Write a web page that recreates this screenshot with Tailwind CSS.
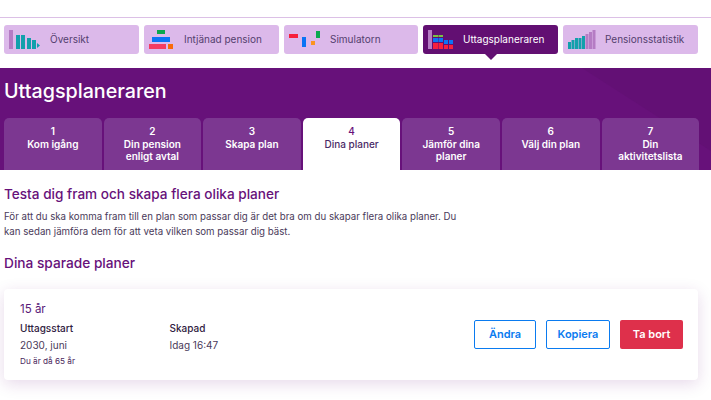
<!DOCTYPE html>
<html lang="sv">
  <head>
    <meta charset="UTF-8" />
    <meta name="viewport" content="width=device-width, initial-scale=1.0" />
    <title>Uttagsplaneraren</title>
    <script src="https://cdn.jsdelivr.net/npm/@tailwindcss/browser@4"></script>
  </head>
  <body class="bg-white min-h-screen font-['Inter',sans-serif] text-[#3c2a4d]">
    <!-- Top navigation -->
    <div class="mt-[17px] h-[51px] border-t border-[#dcc0e6] pt-[7px] pl-[4px]">
      <div class="flex gap-[5px]">
        <a class="flex items-center w-[135px] h-[29px] rounded-[3px] bg-[#dcb9ea] text-[10px] text-[#54406e]">
          <svg width="36" height="24" viewBox="8 28 36 24" class="ml-[4px] shrink-0">
            <rect x="9" y="30" width="4" height="19" fill="#b57cc4" />
            <rect x="16" y="35" width="4" height="14" fill="#12a0ac" />
            <rect x="21" y="35" width="4" height="14" fill="#12a0ac" />
            <rect x="27" y="38" width="4" height="11" fill="#12a0ac" />
            <rect x="32" y="40" width="4" height="9" fill="#12a0ac" />
            <polygon points="37,43 40,45.5 37,48" fill="#12a0ac" />
          </svg>
          <span class="ml-[6px]">Översikt</span>
        </a>
        <a class="flex items-center w-[135px] h-[29px] rounded-[3px] bg-[#dcb9ea] text-[10px] text-[#54406e]">
          <svg width="26" height="24" viewBox="148 28 26 24" class="ml-[4px] shrink-0">
            <rect x="157" y="30" width="8" height="4" fill="#0ba84f" />
            <rect x="152" y="37" width="18" height="5" fill="#0b74f5" />
            <rect x="149" y="44" width="17" height="5" fill="#f53c62" />
            <rect x="168" y="44" width="5" height="5" fill="#f96a0a" />
          </svg>
          <span class="ml-[10px]">Intjänad pension</span>
        </a>
        <a class="flex items-center w-[134px] h-[29px] rounded-[3px] bg-[#dcb9ea] text-[10px] text-[#54406e]">
          <svg width="36" height="24" viewBox="288 28 36 24" class="ml-[4px] shrink-0">
            <rect x="289" y="34" width="9" height="4" fill="#f7203c" />
            <rect x="302" y="37" width="4" height="10" fill="#0b74f5" />
            <rect x="311" y="41" width="4" height="4" fill="#fb9420" />
            <rect x="316" y="31" width="4" height="7" fill="#0ba84f" />
          </svg>
          <span class="ml-[6px]">Simulatorn</span>
        </a>
        <a class="relative flex items-center w-[135px] h-[29px] rounded-[3px] bg-[#620f72] text-[10px] text-white">
          <svg width="28" height="24" viewBox="427 28 28 24" class="ml-[4px] shrink-0">
            <rect x="428" y="30" width="4" height="19" fill="#b57cc4" />
            <rect x="433" y="35" width="5" height="2" fill="#7cc242" />
            <rect x="438.5" y="35" width="4.5" height="2" fill="#7cc242" />
            <rect x="433" y="38" width="5" height="4" fill="#0b74f5" />
            <rect x="438.5" y="38" width="4.5" height="4" fill="#0b74f5" />
            <rect x="433" y="43" width="5" height="6" fill="#f7203c" />
            <rect x="438.5" y="43" width="4.5" height="6" fill="#f7203c" />
            <rect x="444" y="40" width="4" height="4" fill="#0b74f5" />
            <rect x="449" y="40" width="4" height="4" fill="#0b74f5" />
            <rect x="444" y="45" width="4" height="4" fill="#f7203c" />
            <rect x="449" y="45" width="4" height="4" fill="#f7203c" />
          </svg>
          <span class="ml-[8px]">Uttagsplaneraren</span>
          <span class="absolute left-[62px] top-[29px] w-0 h-0 border-x-[6px] border-x-transparent border-t-[6px] border-t-[#620f72]"></span>
        </a>
        <a class="flex items-center w-[135px] h-[29px] rounded-[3px] bg-[#dcb9ea] text-[10px] text-[#54406e]">
          <svg width="30" height="24" viewBox="567 28 30 24" class="ml-[4px] shrink-0">
            <rect x="568" y="42" width="3" height="7" fill="#12a0ac" />
            <rect x="571.5" y="40" width="3" height="9" fill="#12a0ac" />
            <rect x="575" y="38" width="3" height="11" fill="#12a0ac" />
            <rect x="578.5" y="38" width="3" height="11" fill="#12a0ac" />
            <rect x="582" y="36" width="3" height="13" fill="#12a0ac" />
            <rect x="585.5" y="34" width="3" height="15" fill="#b57cc4" />
            <rect x="589" y="32" width="3" height="17" fill="#b57cc4" />
            <rect x="592.5" y="30" width="3" height="19" fill="#b57cc4" />
          </svg>
          <span class="ml-[8px]">Pensionsstatistik</span>
        </a>
      </div>
    </div>

    <!-- Purple header with steps -->
    <div class="relative h-[102px] bg-[#67117a] overflow-hidden">
      <svg width="711" height="102" class="absolute left-0 top-0">
        <polygon points="582,0 711,0 711,83" fill="#631075" />
      </svg>
      <h1 class="relative pl-[4px] pt-[10px] h-[50px] text-[19.7px] leading-[26px] font-medium text-white">Uttagsplaneraren</h1>
      <div class="relative flex gap-[2px] pl-[4px] text-[10px] leading-[12.5px] font-semibold text-white text-center">
        <div class="w-[97.6px] h-[52px] pt-[7px] rounded-t-[5px] bg-[#7c3791]">1<br />Kom igång</div>
        <div class="w-[97.6px] h-[52px] pt-[7px] rounded-t-[5px] bg-[#7c3791]">2<br />Din pension<br />enligt avtal</div>
        <div class="w-[97.6px] h-[52px] pt-[7px] rounded-t-[5px] bg-[#7c3791]">3<br />Skapa plan</div>
        <div class="w-[97.6px] h-[52px] pt-[7px] rounded-t-[5px] bg-white text-[#4a2a66] font-medium"><span class="text-[#67117a]">4</span><br />Dina planer</div>
        <div class="w-[97.6px] h-[52px] pt-[7px] rounded-t-[5px] bg-[#7c3791]">5<br />Jämför dina<br />planer</div>
        <div class="w-[97.6px] h-[52px] pt-[7px] rounded-t-[5px] bg-[#7c3791]">6<br />Välj din plan</div>
        <div class="w-[97.6px] h-[52px] pt-[7px] rounded-t-[5px] bg-[#7c3791]">7<br />Din<br />aktivitetslista</div>
      </div>
    </div>

    <!-- Content -->
    <div class="px-[4px]">
      <h2 class="mt-[15px] text-[13.6px] leading-[18px] font-medium text-[#67117a]">Testa dig fram och skapa flera olika planer</h2>
      <p class="mt-[6px] w-[470px] text-[9.7px] leading-[15px] text-[#4a3a5a]">För att du ska komma fram till en plan som passar dig är det bra om du skapar flera olika planer. Du kan sedan jämföra dem för att veta vilken som passar dig bäst.</p>
      <h2 class="mt-[15px] text-[13.7px] leading-[18px] font-medium text-[#67117a]">Dina sparade planer</h2>

      <!-- Saved plan card -->
      <div class="mt-[17px] flex items-center justify-between w-[694px] h-[91px] rounded-[4px] bg-white pl-[16px] pr-[15px] shadow-[0_4px_16px_rgba(103,17,122,0.16)]">
        <div>
          <div class="mt-[1px] text-[11.5px] leading-[14px] text-[#5a1a78]">15 år</div>
          <div class="mt-[4px] flex text-[10px] leading-[16px]">
            <div class="w-[149.5px]">
              <div class="font-medium text-[#2f2040]">Uttagsstart</div>
              <div class="mt-[1px] text-[#4a3a5a]">2030, juni</div>
              <div class="text-[8.2px] text-[#4a1f5c]">Du är då 65 år</div>
            </div>
            <div>
              <div class="font-medium text-[#2f2040]">Skapad</div>
              <div class="mt-[1px] text-[#4a3a5a]">Idag 16:47</div>
            </div>
          </div>
        </div>
        <div class="flex gap-[10px] text-[11px] font-semibold">
          <button class="w-[62px] h-[29px] rounded-[2px] border border-[#0a7bf0] text-[#0a7bf0]">Ändra</button>
          <button class="w-[64px] h-[29px] rounded-[2px] border border-[#0a7bf0] text-[#0a7bf0]">Kopiera</button>
          <button class="w-[63px] h-[29px] rounded-[2px] bg-[#de304b] text-white">Ta bort</button>
        </div>
      </div>
    </div>
  </body>
</html>
